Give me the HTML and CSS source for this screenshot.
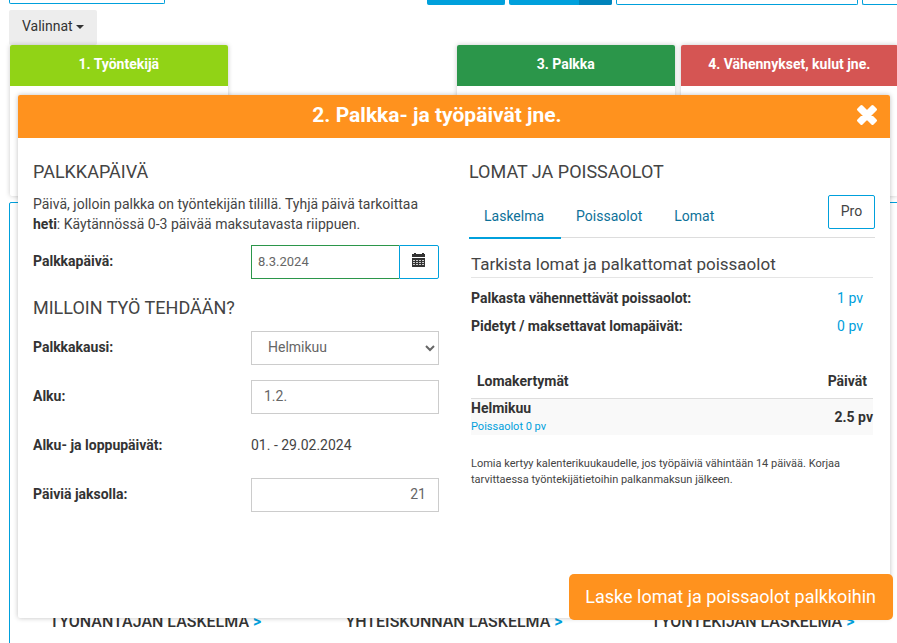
FILE: index.html
```html
<!DOCTYPE html>
<html lang="fi">
<head>
<meta charset="utf-8">
<title>Palkkalaskelma</title>
<link rel="stylesheet" href="styles.css">
</head>
<body>
<main class="page">
  <div class="toolbar">
    <div class="tool tool-name"></div>
    <div class="tool-group">
      <div class="tool tool-solid tool-save"></div>
      <div class="tool tool-solid tool-send"><span class="tool-caret"></span></div>
      <div class="tool tool-wide"></div>
      <div class="tool tool-last"></div>
    </div>
  </div>
  <button class="options" type="button">Valinnat <span class="caret"></span></button>
  <div class="cards">
    <section class="card"><h2 class="card-title green-light">1. Työntekijä</h2></section>
    <div></div>
    <section class="card"><h2 class="card-title green">3. Palkka</h2></section>
    <section class="card"><h2 class="card-title red">4. Vähennykset, kulut jne.</h2></section>
  </div>
  <section class="results">
    <h3 class="result">TYÖNANTAJAN LASKELMA <a href="#">&gt;</a></h3>
    <h3 class="result">YHTEISKUNNAN LASKELMA <a href="#">&gt;</a></h3>
    <h3 class="result">TYÖNTEKIJÄN LASKELMA <a href="#">&gt;</a></h3>
  </section>
</main>

<div class="dialog" role="dialog" aria-labelledby="dialog-title">
  <header class="dialog-head">
    <h1 class="dialog-title" id="dialog-title">2. Palkka- ja työpäivät jne.</h1>
    <button class="close" type="button" aria-label="Sulje">
      <svg viewBox="0 0 22 22" width="22" height="22"><path d="M5.500 2.500 11 8 16.500 2.500 19.500 5.500 14 11 19.500 16.500 16.500 19.500 11 14 5.500 19.500 2.500 16.500 8 11 2.500 5.500z" fill="#fff" stroke="#fff" stroke-width="3" stroke-linejoin="round"/></svg>
    </button>
  </header>
  <div class="dialog-body">
    <section class="column">
      <h2 class="heading">PALKKAPÄIVÄ</h2>
      <p class="intro">Päivä, jolloin palkka on työntekijän tilillä. Tyhjä päivä tarkoittaa <strong>heti</strong>: Käytännössä 0-3 päivää maksutavasta riippuen.</p>
      <div class="row">
        <label for="paydate">Palkkapäivä:</label>
        <div class="date">
          <input class="control date-input" id="paydate" type="text" value="8.3.2024">
          <button class="date-button" type="button" aria-label="Valitse päivä">
            <svg viewBox="0 0 14 14" width="14" height="14" fill="#333"><path d="M0 1h2V0h2v1h6V0h2v1h1v3H0z"/><path fill-rule="evenodd" d="M0 5h13v8.500q0 .5-.5.5H.5q-.5 0-.5-.5zM1 7v.7h2V7zM4 7v.7h2V7zM7 7v.7h2V7zM10 7v.7h2V7zM1 9v.7h2V9zM4 9v.7h2V9zM7 9v.7h2V9zM10 9v.7h2V9zM1 11v.7h2V11zM4 11v.7h2V11zM7 11v.7h2V11zM10 11v.7h2V11z"/></svg>
          </button>
        </div>
      </div>
      <h2 class="heading">MILLOIN TYÖ TEHDÄÄN?</h2>
      <div class="row">
        <label for="period">Palkkakausi:</label>
        <select class="control" id="period"><option>Helmikuu</option></select>
      </div>
      <div class="row">
        <label for="start">Alku:</label>
        <input class="control" id="start" type="text" value="1.2.">
      </div>
      <div class="row">
        <span class="label">Alku- ja loppupäivät:</span>
        <span>01. - 29.02.2024</span>
      </div>
      <div class="row">
        <label for="days">Päiviä jaksolla:</label>
        <input class="control number" id="days" type="text" value="21">
      </div>
    </section>

    <section class="column">
      <h2 class="heading">LOMAT JA POISSAOLOT</h2>
      <nav class="tabs">
        <a class="tab active" href="#">Laskelma</a>
        <a class="tab" href="#">Poissaolot</a>
        <a class="tab" href="#">Lomat</a>
        <button class="pro" type="button">Pro</button>
      </nav>
      <div class="summary">
        <h3 class="subheading">Tarkista lomat ja palkattomat poissaolot</h3>
        <div class="total"><span class="label">Palkasta vähennettävät poissaolot:</span><a href="#">1 pv</a></div>
        <div class="total"><span class="label">Pidetyt / maksettavat lomapäivät:</span><a href="#">0 pv</a></div>
        <table class="accrual">
          <thead><tr><th>Lomakertymät</th><th class="right">Päivät</th></tr></thead>
          <tbody><tr><td>Helmikuu<a class="small" href="#">Poissaolot 0 pv</a></td><td class="right">2.5 pv</td></tr></tbody>
        </table>
        <p class="note">Lomia kertyy kalenterikuukaudelle, jos työpäiviä vähintään 14 päivää. Korjaa tarvittaessa työntekijätietoihin palkanmaksun jälkeen.</p>
      </div>
    </section>
  </div>
  <button class="calculate" type="button">Laske lomat ja poissaolot palkkoihin</button>
</div>
</body>
</html>
```
FILE: styles.css
```css
* { box-sizing: border-box; }

body {
  margin: 0;
  min-height: 100vh;
  position: relative;
  overflow: hidden;
  background: #fff;
  color: #333;
  font: 14px/20px Roboto, sans-serif;
}

h1, h2, h3, p { margin: 0; }
a { color: #00a0dc; text-decoration: none; }
button, input, select { font: inherit; color: inherit; }
button { padding: 0; cursor: pointer; }

/* Page behind the dialog */
.page { margin: 0 -2px 0 9px; }

.toolbar {
  display: flex;
  justify-content: space-between;
  height: 10px;
}
.tool-group { display: flex; gap: 4px; }
.tool {
  height: 5px;
  border: 1px solid #00a0dc;
  border-top: 0;
  border-radius: 0 0 2px 2px;
}
.tool-name { width: 156px; height: 4px; }
.tool-solid { background: #00a0dc; }
.tool-save { width: 78px; }
.tool-send {
  display: flex;
  justify-content: flex-end;
  width: 103px;
  border: 0;
  overflow: hidden;
}
.tool-caret { width: 33px; background: #0083bb; }
.tool-wide { width: 242px; }
.tool-last { width: 37px; border-right: 0; }

.options {
  display: block;
  width: 88px;
  height: 35px;
  border: 0;
  border-radius: 2px;
  background: #ededed;
  padding-bottom: 4px;
}
.caret {
  display: inline-block;
  border: 4px solid transparent;
  border-top-color: #333;
  border-bottom: 0;
  vertical-align: middle;
}

.cards {
  display: grid;
  grid-template-columns: repeat(4, 1fr);
  gap: 6px;
  margin: 0 1px;
}
.card {
  min-height: 151px;
  border-radius: 2px;
  background: #fff;
  box-shadow: 0 0 5px rgba(0, 0, 0, .22);
}
.card-title {
  height: 41px;
  border-radius: 2px 2px 0 0;
  color: #fff;
  font-size: 14px;
  font-weight: 700;
  line-height: 39px;
  text-align: center;
}
.green-light { background: #91d316; }
.green { background: #2b964a; }
.red { background: #d55553; }

.results {
  display: grid;
  grid-template-columns: repeat(3, 1fr);
  gap: 8px;
  margin-top: 6px;
  padding: 409px 0 30px;
  border: 1px solid #00a0dc;
  border-radius: 2px;
}
.result {
  font-size: 16px;
  font-weight: 500;
  text-align: center;
}
.result a { font-weight: 700; }

/* Dialog */
.dialog {
  position: absolute;
  top: 95px;
  left: 18px;
  right: 7px;
  padding-bottom: 91px;
  border-radius: 2px;
  background: #fff;
  box-shadow: 0 0 5px rgba(0, 0, 0, .25);
  color: #444;
}
.dialog-head {
  display: flex;
  align-items: center;
  height: 43px;
  padding: 0 12px 0 0;
  border-radius: 2px 2px 0 0;
  background: #ff921e;
  color: #fff;
}
.dialog-title {
  flex: 1;
  padding-bottom: 3px;
  font-size: 21px;
  font-weight: 700;
  line-height: 24px;
  text-align: center;
}
.close {
  height: 22px;
  margin-bottom: 4px;
  border: 0;
  background: none;
}
.close svg, .date-button svg { display: block; }

.dialog-body {
  display: grid;
  grid-template-columns: 1fr 1fr;
  gap: 30px;
  padding: 24px 15px 0;
}
.heading {
  font-size: 18px;
  font-weight: 400;
  line-height: 20px;
}
.intro { margin: 12px 0 11px; }

.row {
  display: grid;
  grid-template-columns: 218px 1fr;
  height: 34px;
  margin-bottom: 15px;
  line-height: 32px;
}
.row + .heading { margin: 19px 0 13px; }
label, .label, strong { color: #333; font-weight: 700; }
.control {
  width: 100%;
  height: 34px;
  padding: 0 12px 2px;
  border: 1px solid #ccc;
  border-radius: 0;
  background: #fff;
  color: #666;
}
.number { text-align: right; }
.date { display: flex; }
.date-input {
  flex: 1;
  min-width: 0;
  padding: 0 6px 2px;
  border-color: #2b964a;
  border-right: 0;
  font-size: 13px;
}
.date-button {
  width: 40px;
  height: 34px;
  padding: 0 12px 4px;
  border: 1px solid #00a0dc;
  border-radius: 0 2px 2px 0;
  background: #fff;
}

.tabs {
  display: flex;
  align-items: flex-start;
  margin-top: 13px;
  height: 43px;
  border-bottom: 1px solid #ddd;
}
.tab {
  height: 44px;
  padding: 0 17px 0 15px;
  border-bottom: 2px solid transparent;
  color: #0d7199;
  line-height: 42px;
}
.tab.active { border-bottom-color: #00a0dc; }
.pro {
  width: 47px;
  height: 34px;
  margin-left: auto;
  padding-bottom: 2px;
  border: 1px solid #00a0dc;
  border-radius: 2px;
  background: #fff;
}

.summary { padding: 16px 2px 0; }
.subheading {
  height: 24px;
  margin-bottom: 6px;
  border-bottom: 1px solid #e5e5e5;
  font-size: 17px;
  font-weight: 400;
  line-height: 20px;
}
.total {
  display: flex;
  justify-content: space-between;
  padding: 4px 10px 4px 0;
}

.accrual {
  width: 100%;
  margin-top: 24px;
  border-collapse: collapse;
  color: #333;
}
.accrual th {
  padding: 7px 6px;
  border-bottom: 1px solid #ddd;
  text-align: left;
}
.accrual td {
  padding: 0;
  background: #f9f9f9;
  font-weight: 700;
  line-height: 18px;
}
.accrual .right { text-align: right; }
.small {
  display: block;
  margin-top: 2px;
  font-size: 11px;
  font-weight: 400;
  line-height: 16px;
}
.note {
  margin-top: 21px;
  font-size: 11px;
  line-height: 16px;
}

.calculate {
  position: absolute;
  right: -3px;
  bottom: -2px;
  height: 46px;
  padding: 0 17px 0 16px;
  border: 0;
  border-radius: 5px;
  background: #ff921e;
  color: #fff;
  font-size: 18px;
}
```
